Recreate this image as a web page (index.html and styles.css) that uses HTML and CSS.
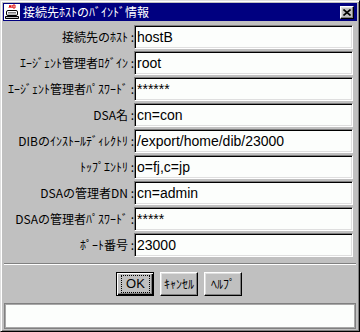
FILE: index.html
```html
<!DOCTYPE html>
<html lang="ja">
<head>
<meta charset="utf-8">
<title>接続先ﾎｽﾄのﾊﾞｲﾝﾄﾞ情報</title>
<link rel="stylesheet" href="styles.css">
</head>
<body>
<div class="window">
  <div class="titlebar">
    <svg class="app-icon" width="16" height="16" viewBox="0 0 16 16">
      <rect x="0" y="0" width="16" height="16" fill="#ffffff"/>
      <path d="M5 4 L6 1 L7 4 M8 1 L8 4 M9 1 L11 1 L11 4 L9 4 Z" fill="none" stroke="#e01010" stroke-width="1"/>
      <rect x="2.5" y="6.5" width="11" height="5" rx="1.5" fill="#ffffff" stroke="#000" stroke-width="1"/>
      <path d="M4 8.5 H12 M4 10 H12" stroke="#808080" stroke-width="1"/>
      <path d="M1.5 12.5 H14.5 V14.5 H1.5 Z" fill="#c0c0c0" stroke="#000" stroke-width="1"/>
    </svg>
    <span class="title">接続先ﾎｽﾄのﾊﾞｲﾝﾄﾞ情報</span>
    <div class="close-btn">
      <svg width="8" height="7" viewBox="0 0 8 7">
        <path d="M0.5 0.5 L7.5 6.5 M7.5 0.5 L0.5 6.5" stroke="#000" stroke-width="1.6"/>
      </svg>
    </div>
  </div>

  <div class="form">
    <div class="lbl">接続先のﾎｽﾄ :</div><div class="field">hostB</div>
    <div class="lbl">ｴｰｼﾞｪﾝﾄ管理者ﾛｸﾞｲﾝ :</div><div class="field">root</div>
    <div class="lbl">ｴｰｼﾞｪﾝﾄ管理者ﾊﾟｽﾜｰﾄﾞ :</div><div class="field">******</div>
    <div class="lbl">DSA名 :</div><div class="field">cn=con</div>
    <div class="lbl">DIBのｲﾝｽﾄｰﾙﾃﾞｨﾚｸﾄﾘ :</div><div class="field">/export/home/dib/23000</div>
    <div class="lbl">ﾄｯﾌﾟｴﾝﾄﾘ :</div><div class="field">o=fj,c=jp</div>
    <div class="lbl">DSAの管理者DN :</div><div class="field">cn=admin</div>
    <div class="lbl">DSAの管理者ﾊﾟｽﾜｰﾄﾞ :</div><div class="field">*****</div>
    <div class="lbl">ﾎﾟｰﾄ番号 :</div><div class="field">23000</div>
  </div>

  <div class="sep"></div>

  <div class="buttons">
    <div class="btn default"><span class="focus">OK</span></div>
    <div class="btn">ｷｬﾝｾﾙ</div>
    <div class="btn">ﾍﾙﾌﾟ</div>
  </div>

  <div class="status"></div>
</div>
</body>
</html>
```

FILE: styles.css
```css
html, body {
  margin: 0;
  padding: 0;
}

body {
  width: 360px;
  height: 332px;
  overflow: hidden;
  background: #c0c0c0;
  font-family: "Noto Sans CJK JP", "Liberation Sans", sans-serif;
  font-size: 12px;
  color: #000;
}

.window {
  box-sizing: border-box;
  width: 360px;
  height: 332px;
  border: 1px solid;
  border-color: #dfdfdf #000 #000 #dfdfdf;
  box-shadow: inset 1px 1px 0 #fff, inset -1px -1px 0 #808080;
  padding: 2px;
  background: #c0c0c0;
  display: flex;
  flex-direction: column;
}

.titlebar {
  height: 18px;
  flex: none;
  background: #000080;
  color: #fff;
  display: flex;
  align-items: center;
  padding-left: 1px;
}

.app-icon {
  display: block;
  flex: none;
  margin-right: 3px;
}

.title {
  font-size: 12px;
  line-height: 18px;
  white-space: nowrap;
}

.close-btn {
  margin-left: auto;
  margin-right: 3px;
  box-sizing: border-box;
  width: 14px;
  height: 13px;
  background: #c0c0c0;
  border: 1px solid;
  border-color: #fff #000 #000 #fff;
  box-shadow: inset -1px -1px 0 #808080, inset 1px 1px 0 #dfdfdf;
  display: flex;
  align-items: center;
  justify-content: center;
}

.close-btn svg {
  display: block;
}

.form {
  flex: none;
  display: grid;
  grid-template-columns: 131px 219px;
  grid-auto-rows: 24px;
  row-gap: 2px;
  padding-top: 4px;
}

.lbl {
  align-self: center;
  text-align: right;
  white-space: nowrap;
  line-height: 16px;
  font-size: 12px;
}

.field {
  box-sizing: border-box;
  height: 24px;
  border: 1px solid;
  border-color: #808080 #fff #fff #808080;
  box-shadow: inset 1px 1px 0 #000, inset -1px -1px 0 #dfdfdf;
  background: #fcfefc;
  padding: 1px 2px 1px 2px;
  font-family: "Liberation Sans", Arial, sans-serif;
  font-size: 14px;
  line-height: 20px;
  white-space: nowrap;
  overflow: hidden;
}

.sep {
  flex: none;
  margin: 6px 1px 0;
  height: 0;
  border-top: 1px solid #808080;
  border-bottom: 1px solid #fff;
}

.buttons {
  flex: none;
  margin-top: 7px;
  height: 24px;
  display: flex;
  justify-content: center;
  gap: 6px;
  padding-right: 2px;
}

.btn {
  box-sizing: border-box;
  width: 38px;
  height: 24px;
  background: #c0c0c0;
  border: 1px solid;
  border-color: #fff #000 #000 #fff;
  box-shadow: inset -1px -1px 0 #808080, inset 1px 1px 0 #dfdfdf;
  display: flex;
  align-items: center;
  justify-content: center;
  font-size: 12px;
  line-height: 16px;
  white-space: nowrap;
}

.btn.default {
  border-color: #000;
  box-shadow: inset 1px 1px 0 #fff, inset -1px -1px 0 #000, inset -2px -2px 0 #808080;
  align-items: stretch;
  justify-content: stretch;
}

.focus {
  flex: 1;
  margin: 2px 3px 2px 4px;
  border: 1px dotted #000;
  display: flex;
  align-items: center;
  justify-content: center;
  font-family: "Liberation Sans", Arial, sans-serif;
  font-size: 13px;
}

.status {
  flex: none;
  box-sizing: border-box;
  margin: 7px 1px 0;
  height: 26px;
  border: 1px solid #808080;
  box-shadow: inset 0 0 0 1px #a8a8a8;
  background: #fcfefc;
}
```
